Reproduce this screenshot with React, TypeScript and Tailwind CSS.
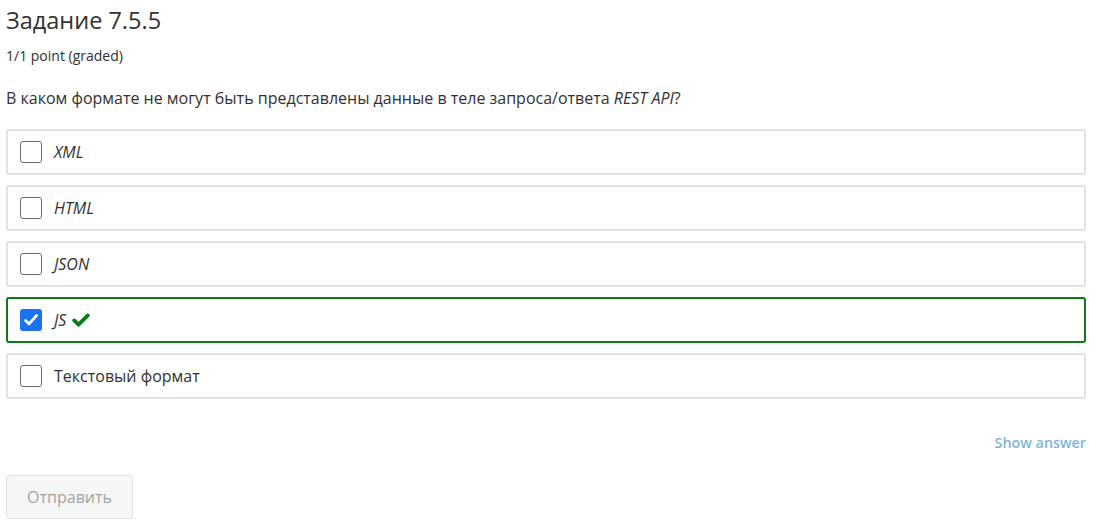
const OPTIONS = [
  { label: 'XML', italic: true },
  { label: 'HTML', italic: true },
  { label: 'JSON', italic: true },
  { label: 'JS', italic: true, checked: true },
  { label: 'Текстовый формат', italic: false },
]

export default function App() {
  return (
    <div className="bg-white w-[1103px] h-[532px] px-[6px] pt-[6px] text-[#313131] font-['Open_Sans',sans-serif]">
      <h3 className="text-[23.5px] leading-[28px] text-[#313131]">Задание 7.5.5</h3>
      <div className="text-[14px] leading-[20px] mt-[12px] text-[#313131]">1/1 point (graded)</div>
      <p className="text-[16px] leading-[22px] mt-[21px]">
        В каком формате не могут быть представлены данные в теле запроса/ответа <em>REST API</em>?
      </p>

      <div className="mt-[20px] w-[1080px] flex flex-col gap-[10px]">
        {OPTIONS.map((o) => (
          <label
            key={o.label}
            className={
              'h-[46px] flex items-center rounded-[3px] border-2 pl-[12px] ' +
              (o.checked ? 'border-[#0a7a1a]' : 'border-[#e2e2e2]')
            }
          >
            {o.checked ? (
              <span className="w-[22px] h-[22px] rounded-[3px] bg-[#1c72ee] flex items-center justify-center">
                <svg width="14" height="12" viewBox="0 0 14 12" fill="none">
                  <path d="M1.6 6.4l3.5 3.5 7.4-8.4" stroke="white" strokeWidth="2.8" strokeLinecap="round" strokeLinejoin="round" />
                </svg>
              </span>
            ) : (
              <span className="w-[22px] h-[22px] rounded-[3px] border border-[#6b6b6b] bg-white" />
            )}
            <span className={'ml-[12px] text-[16px] text-[#313131] ' + (o.italic ? 'italic' : '')}>{o.label}</span>
            {o.checked && (
              <svg className="ml-[6px]" width="18" height="14" viewBox="0 0 18 14" fill="none">
                <path d="M2.2 7.4l4.3 4.3L15.8 2.4" stroke="#0a7a1a" strokeWidth="3.8" strokeLinecap="round" strokeLinejoin="round" />
              </svg>
            )}
          </label>
        ))}
      </div>

      <div className="w-[1080px] flex justify-end mt-[34px]">
        <span className="text-[14.3px] leading-[20px] font-semibold text-[#7eb6d6]">Show answer</span>
      </div>

      <button className="mt-[22px] w-[127px] h-[44px] rounded-[3px] border border-[#e3e3e3] bg-[#f5f6f6] text-[16px] text-[#a3a3a3]">
        Отправить
      </button>
    </div>
  )
}
